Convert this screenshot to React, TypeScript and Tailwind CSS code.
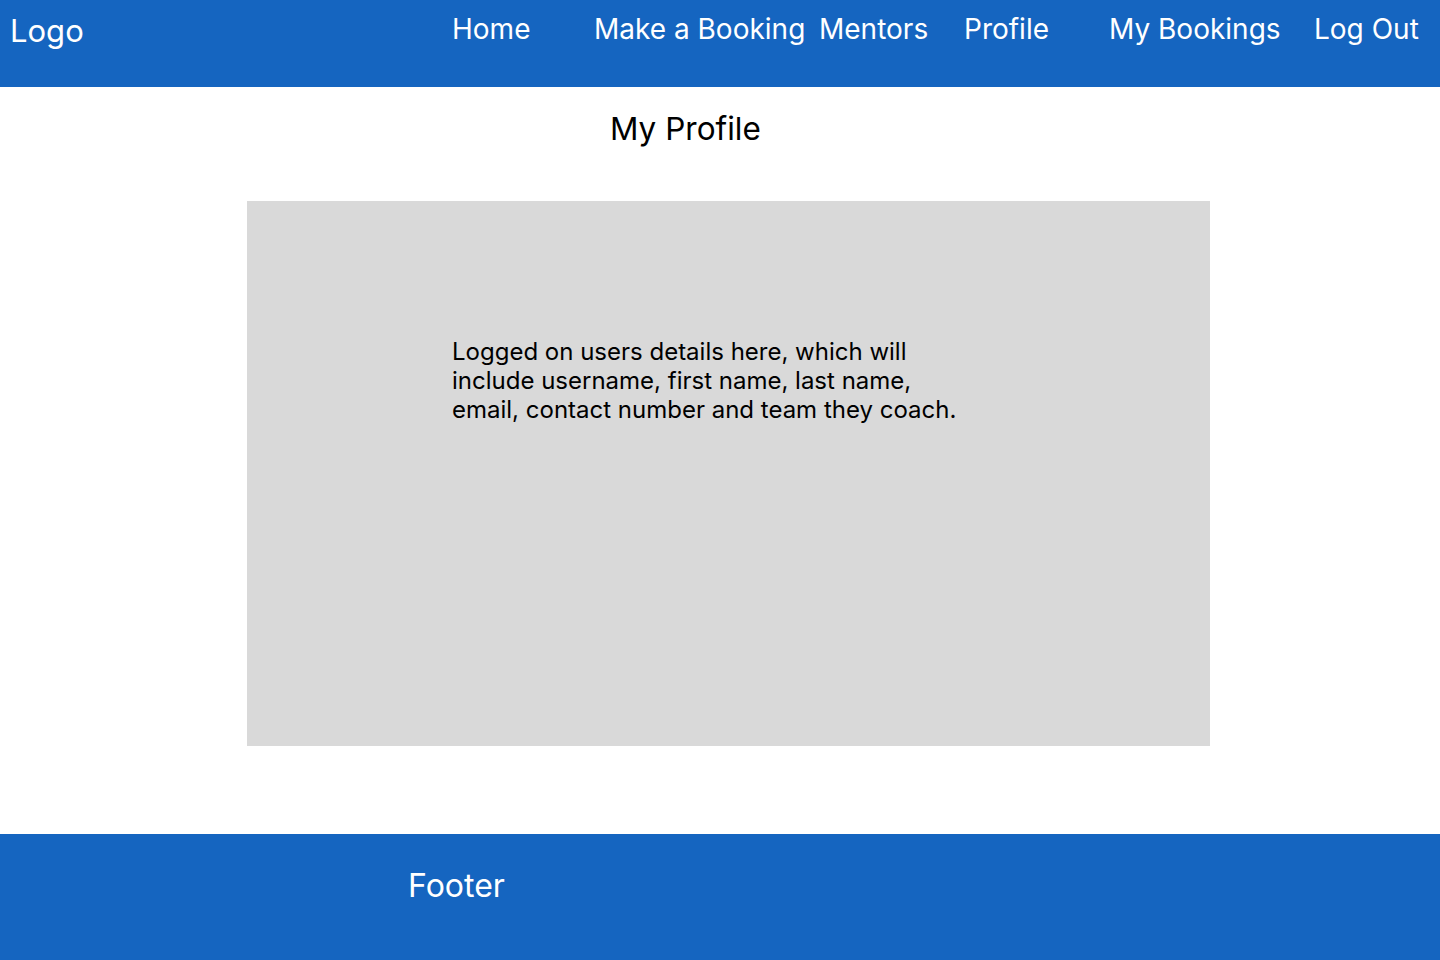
import React from 'react';

const nav = [
  { label: 'Home', w: 'w-[142px]' },
  { label: 'Make a Booking', w: 'w-[225px]' },
  { label: 'Mentors', w: 'w-[145px]' },
  { label: 'Profile', w: 'w-[145px]' },
  { label: 'My Bookings', w: 'w-[205px]' },
  { label: 'Log Out', w: 'w-[126px]' },
];

export default function App() {
  return (
    <div className="w-[1440px] h-[960px] flex flex-col bg-white font-['Inter','Noto_Sans',sans-serif]">
      {/* header */}
      <header className="h-[87px] bg-[#1565c0] text-white flex items-start">
        <div className="pl-[10px] pt-[11px] text-[31px] leading-[40px] w-[452px]">Logo</div>
        <nav className="flex pt-[10px]">
          {nav.map((n) => (
            <a key={n.label} className={`${n.w} text-[28px] leading-[38px] whitespace-nowrap`}>
              {n.label}
            </a>
          ))}
        </nav>
      </header>

      <main className="flex-1 flex flex-col">
        <h1 className="pl-[610px] pt-[22px] text-[31.5px] leading-[40px] text-black">My Profile</h1>
        <div className="ml-[247px] mt-[52px] w-[963px] h-[545px] bg-[#d9d9d9] pl-[205px] pt-[136px]">
          <p className="w-[515px] text-[24px] leading-[29px] text-black">
            Logged on users details here, which will include username, first name, last name, email, contact number and team they coach.
          </p>
        </div>
      </main>

      {/* footer */}
      <footer className="h-[126px] bg-[#1565c0] text-white pl-[408px] pt-[32px]">
        <div className="text-[32px] leading-[40px]">Footer</div>
      </footer>
    </div>
  );
}
